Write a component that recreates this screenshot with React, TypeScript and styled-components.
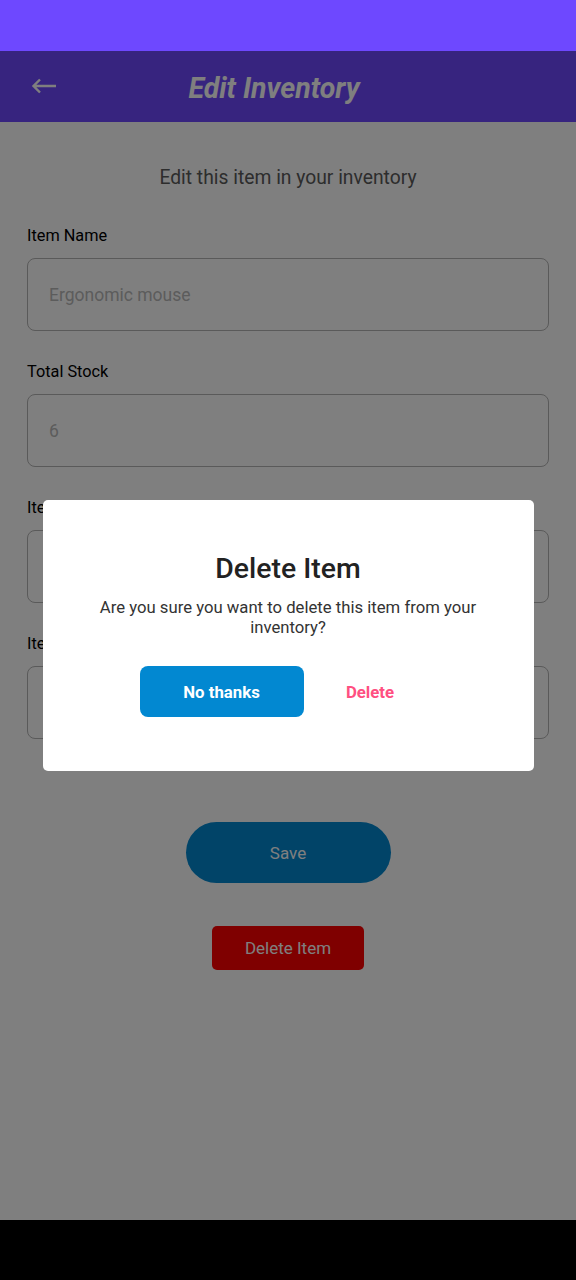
import React from "react";
import styled, { createGlobalStyle } from "styled-components";

const Global = createGlobalStyle`
  html, body { margin: 0; padding: 0; }
  body { font-family: Roboto, "Noto Sans", sans-serif; background: #000; }
  * { box-sizing: border-box; }
`;

const Page = styled.div`
  width: 576px;
  height: 1280px;
  display: flex;
  flex-direction: column;
  overflow: hidden;
`;

const StatusBar = styled.div`
  height: 51px;
  background: #6e48ff;
  flex: none;
`;

const Screen = styled.div`
  position: relative;
  flex: 1;
  display: flex;
  flex-direction: column;
  background: #ffffff;
`;

const Header = styled.header`
  height: 71px;
  background: #6e48ff;
  display: grid;
  grid-template-columns: 80px 1fr 108px;
  align-items: center;
  flex: none;
`;

const BackButton = styled.div`
  padding-left: 31px;
  display: flex;
  align-items: center;
  height: 100%;
  padding-bottom: 2px;
`;

const Title = styled.h1`
  margin: 0;
  text-align: center;
  color: #ffffff;
  font-size: 28.5px;
  font-weight: 700;
  font-style: italic;
  padding-top: 4px;
`;

const Content = styled.main`
  padding: 0 27px;
  display: flex;
  flex-direction: column;
`;

const Subtitle = styled.p`
  margin: 45px 0 37px;
  text-align: center;
  font-size: 19.3px;
  color: #5a5a5a;
  line-height: 22px;
`;

const Field = styled.div`
  display: flex;
  flex-direction: column;
  margin-bottom: 31px;
`;

const Label = styled.label`
  font-size: 16.3px;
  line-height: 19px;
  color: #000;
  margin-bottom: 13px;
`;

const Input = styled.div`
  height: 73px;
  border: 1.5px solid #b4b4b4;
  border-radius: 8px;
  display: flex;
  align-items: center;
  padding-left: 21px;
  font-size: 17.5px;
  color: #b8b8b8;
`;

const SaveButton = styled.div`
  align-self: center;
  margin-top: 52px;
  width: 205px;
  height: 61px;
  border-radius: 31px;
  background: #0288d1;
  color: #fff;
  font-size: 17px;
  display: flex;
  align-items: center;
  justify-content: center;
`;

const DangerButton = styled.div`
  align-self: center;
  margin-top: 43px;
  width: 152px;
  height: 44px;
  border-radius: 5px;
  background: #ff0000;
  color: #fff;
  font-size: 17px;
  display: flex;
  align-items: center;
  justify-content: center;
`;

const Overlay = styled.div`
  position: absolute;
  inset: 0;
  background: rgba(0, 0, 0, 0.5);
  display: flex;
  align-items: center;
  justify-content: center;
`;

const Dialog = styled.div`
  width: 491px;
  height: 271px;
  background: #fff;
  border-radius: 5px;
  display: flex;
  flex-direction: column;
  align-items: center;
  padding: 52px 50px 0;
`;

const DialogTitle = styled.h2`
  margin: 0;
  font-size: 28.4px;
  font-weight: 500;
  color: #222;
  line-height: 33px;
`;

const DialogText = styled.p`
  margin: 13px 0 0;
  font-size: 16.7px;
  line-height: 20px;
  text-align: center;
  color: #333;
`;

const ButtonRow = styled.div`
  margin-top: 28px;
  display: flex;
  align-items: center;
`;

const PrimaryButton = styled.div`
  width: 164px;
  height: 51px;
  border-radius: 8px;
  background: #0288d1;
  color: #fff;
  font-size: 16.8px;
  font-weight: 700;
  display: flex;
  align-items: center;
  justify-content: center;
`;

const TextButton = styled.div<{ $color: string }>`
  width: 133px;
  height: 51px;
  color: ${(p) => p.$color};
  font-size: 16.8px;
  font-weight: 700;
  display: flex;
  align-items: center;
  justify-content: center;
`;

const NavBar = styled.div`
  height: 60px;
  background: #000;
  flex: none;
`;

const fields = [
  { label: "Item Name", value: "Ergonomic mouse" },
  { label: "Total Stock", value: "6" },
  { label: "Item Price", value: "" },
  { label: "Item Description", value: "" },
];

export default function App() {
  return (
    <Page>
      <Global />
      <StatusBar />
      <Screen>
        <Header>
          <BackButton>
            <svg width="26" height="16" viewBox="0 0 26 16" fill="none">
              <path d="M25 8H3M9 1.5L2.5 8L9 14.5" stroke="#ffffff" strokeWidth="2.4" />
            </svg>
          </BackButton>
          <Title>Edit Inventory</Title>
          <div />
        </Header>
        <Content>
          <Subtitle>Edit this item in your inventory</Subtitle>
          {fields.map((f) => (
            <Field key={f.label}>
              <Label>{f.label}</Label>
              <Input>{f.value}</Input>
            </Field>
          ))}
          <SaveButton>Save</SaveButton>
          <DangerButton>Delete Item</DangerButton>
        </Content>
        <Overlay>
          <Dialog>
            <DialogTitle>Delete Item</DialogTitle>
            <DialogText>
              Are you sure you want to delete this item from your inventory?
            </DialogText>
            <ButtonRow>
              <PrimaryButton>No thanks</PrimaryButton>
              <TextButton $color="#ff4f81">Delete</TextButton>
            </ButtonRow>
          </Dialog>
        </Overlay>
      </Screen>
      <NavBar />
    </Page>
  );
}
